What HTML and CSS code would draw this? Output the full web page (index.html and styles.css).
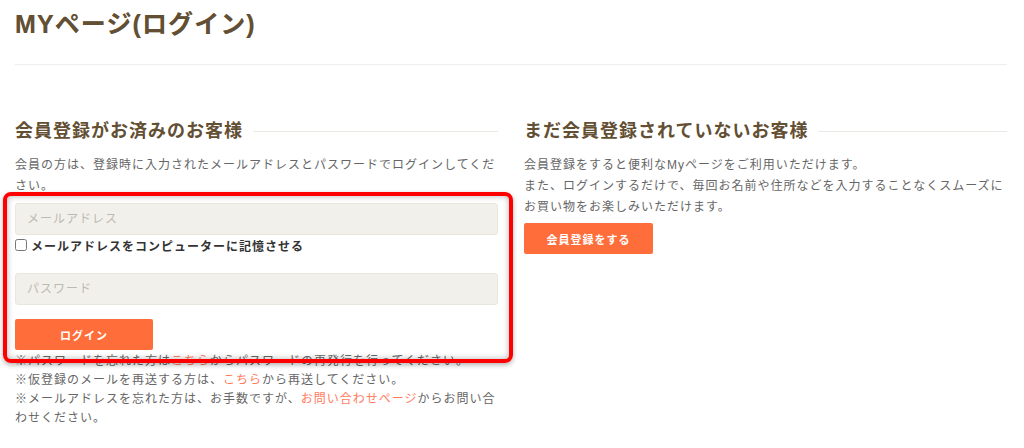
FILE: index.html
```html
<!DOCTYPE html>
<html lang="ja">
<head>
<meta charset="utf-8">
<title>MYページ(ログイン)</title>
<link rel="stylesheet" href="styles.css">
</head>
<body>
<div class="page">
  <h1 class="page-title">MYページ(ログイン)</h1>
  <hr class="rule">
  <div class="columns">
    <section class="col">
      <h2 class="sec-title">会員登録がお済みのお客様</h2>
      <p class="lead">会員の方は、登録時に入力されたメールアドレスとパスワードでログインしてください。</p>
      <input class="field field-mail" type="text" placeholder="メールアドレス">
      <label class="remember"><input class="check" type="checkbox">メールアドレスをコンピューターに記憶させる</label>
      <input class="field field-pass" type="password" placeholder="パスワード">
      <button class="btn btn-login" type="button">ログイン</button>
      <p class="notes">※パスワードを忘れた方は<a href="#">こちら</a>からパスワードの再発行を行ってください。<br>※仮登録のメールを再送する方は、<a href="#">こちら</a>から再送してください。<br>※メールアドレスを忘れた方は、お手数ですが、<a href="#">お問い合わせページ</a>からお問い合わせください。</p>
    </section>
    <section class="col">
      <h2 class="sec-title">まだ会員登録されていないお客様</h2>
      <p class="lead">会員登録をすると便利なMyページをご利用いただけます。<br>また、ログインするだけで、毎回お名前や住所などを入力することなくスムーズにお買い物をお楽しみいただけます。</p>
      <button class="btn btn-register" type="button">会員登録をする</button>
    </section>
  </div>
</div>
<div class="highlight"></div>
</body>
</html>
```

FILE: styles.css
```css
html, body {
  margin: 0;
  padding: 0;
  background: #fff;
}
body {
  font-family: "Liberation Sans", "Noto Sans CJK JP", sans-serif;
  color: #666;
  overflow: hidden;
}
.page {
  padding: 9px 17px 0 15px;
}
.page-title {
  margin: 0;
  font-size: 25px;
  line-height: 30px;
  font-weight: bold;
  letter-spacing: 1.1px;
  color: #634f33;
  text-shadow: 0 0 0.5px rgba(99, 79, 51, 0.6);
}
.rule {
  margin: 25px 0 0;
  border: 0;
  height: 1px;
  background: #efeeea;
}
.columns {
  margin-top: 54px;
  display: grid;
  grid-template-columns: 483px 483px;
  column-gap: 26px;
}
.col {
  display: flex;
  flex-direction: column;
  align-items: flex-start;
}
.sec-title {
  margin: 0;
  width: 100%;
  display: flex;
  align-items: center;
  gap: 10px;
  font-size: 18px;
  line-height: 24px;
  font-weight: bold;
  letter-spacing: 1px;
  color: #634f33;
  white-space: nowrap;
}
.sec-title::after {
  content: "";
  flex: 1;
  height: 1px;
  background: #ebe9e3;
}
.lead {
  margin: 12px 0 0;
  font-size: 12px;
  line-height: 21px;
  letter-spacing: 1px;
  color: #666;
}
.field {
  display: block;
  box-sizing: border-box;
  width: 483px;
  height: 32px;
  margin: 6px 0 0;
  padding: 0 11px;
  border: 1px solid #e9e6de;
  border-radius: 3px;
  background: #f2f0ea;
  font-family: inherit;
  font-size: 12px;
  letter-spacing: 1px;
  color: #555;
  outline: none;
}
.field::placeholder {
  color: #bdbab3;
}
.field-pass {
  margin-top: 19px;
}
.remember {
  margin-top: 1px;
  display: flex;
  align-items: center;
  height: 18px;
  font-size: 12px;
  font-weight: bold;
  letter-spacing: 1px;
  color: #333;
}
.check {
  width: 12px;
  height: 12px;
  margin: 0 4px 0 0;
}
.btn {
  display: block;
  box-sizing: border-box;
  height: 31px;
  border: 0;
  border-radius: 2px;
  background: #ff6e3a;
  color: #fff;
  font-family: inherit;
  font-size: 11px;
  font-weight: bold;
  letter-spacing: 1px;
  padding: 0;
}
.btn-login {
  width: 138px;
  margin-top: 14px;
}
.btn-register {
  width: 129px;
  margin-top: 5px;
}
.notes {
  margin: 2px 0 0;
  font-size: 12px;
  line-height: 19px;
  letter-spacing: 1px;
  color: #666;
}
.notes a {
  color: #ff7b5e;
  text-decoration: none;
}
.highlight {
  position: absolute;
  left: 3px;
  top: 192px;
  width: 510px;
  height: 171px;
  box-sizing: border-box;
  border: 4px solid #ff0000;
  border-radius: 8px;
  box-shadow: inset 0 0 6px rgba(0, 0, 0, 0.3), 0 2px 5px rgba(0, 0, 0, 0.3);
  pointer-events: none;
}
```
